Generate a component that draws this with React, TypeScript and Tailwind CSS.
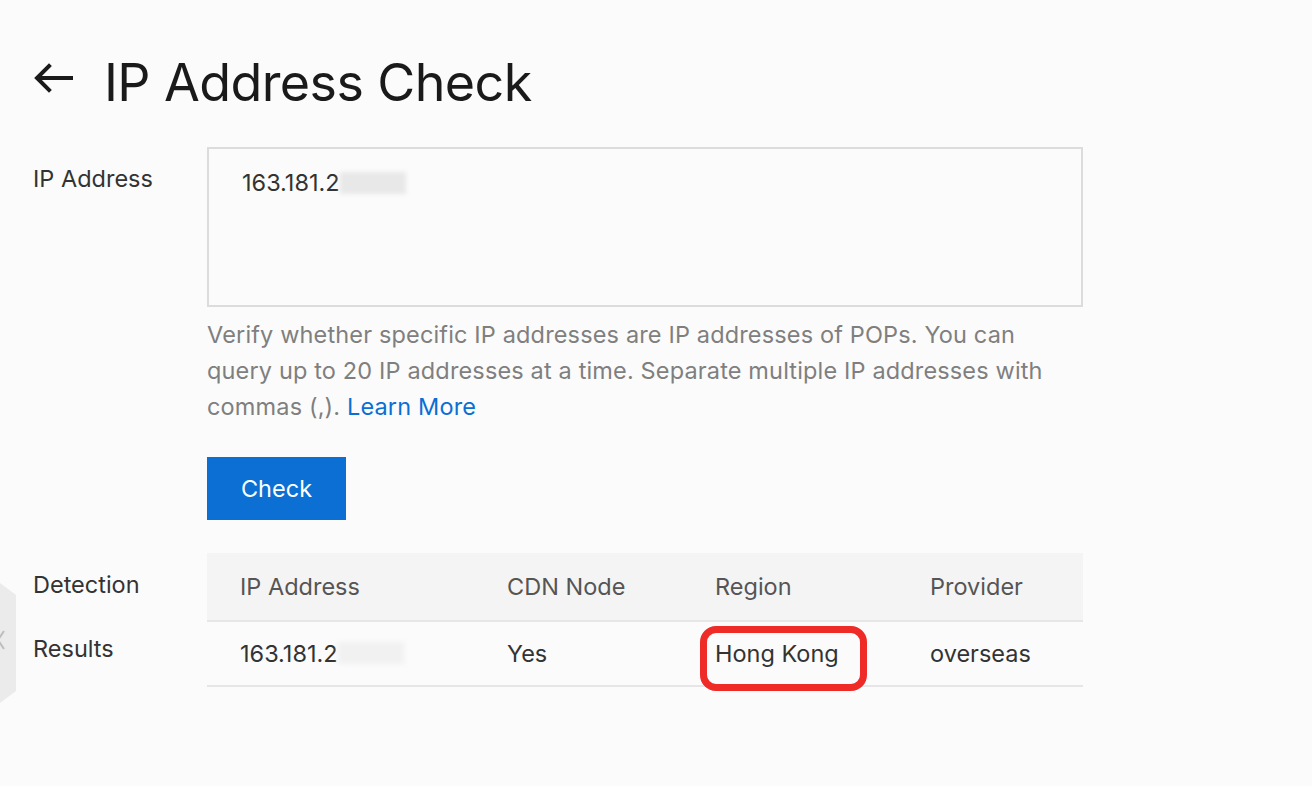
import { FC } from "react"

const columns = [
	{ label: "IP Address", width: "w-[267px]" },
	{ label: "CDN Node", width: "w-[208px]" },
	{ label: "Region", width: "w-[215px]" },
	{ label: "Provider", width: "flex-1" },
]

const BlurMask: FC<{ className: string }> = ({ className }) => (
	<span className={`inline-block align-middle blur-[2px] ${className}`} />
)

const SideHandle: FC = () => (
	<svg className="absolute left-0 top-[583px]" width="18" height="120" viewBox="0 0 18 120">
		<path d="M0 0 L16 12 L16 108 L0 120 Z" fill="#ebebeb" />
		<path d="M4 48 L-2 57 L4 66" stroke="#bdbdbd" strokeWidth="2" fill="none" />
	</svg>
)

const App: FC = () => {
	return (
		<div className="relative w-[1312px] h-[786px] overflow-hidden bg-[#fbfbfb] text-[#333]" style={{ fontFamily: "Inter, 'Liberation Sans', sans-serif" }}>
			<SideHandle />

			<header className="flex items-start pl-[33px] pt-[52px] h-[118px]">
				<svg className="mt-[11px]" width="41" height="30" viewBox="0 0 41 30" fill="none" stroke="#1a1a1a" strokeWidth="4" strokeLinecap="square">
					<path d="M38 15 H5" />
					<path d="M16 3 L4 15 L16 27" />
				</svg>
				<h1 className="ml-[30px] text-[52px] leading-[62px] text-[#1a1a1a] tracking-[-0.6px]">IP Address Check</h1>
			</header>

			<section className="flex mt-[29px]">
				<label className="w-[174px] ml-[33px] pt-[18px] text-[23.5px] leading-[28px]">IP Address</label>
				<div className="w-[876px]">
					<div className="h-[160px] border-2 border-[#dcdcdc] bg-[#fbfbfb] pl-[33px] pt-[20px] text-[23.5px] leading-[28px]">
						163.181.2
						<BlurMask className="w-[66px] h-[22px] -mt-[4px] bg-[#e8e8e8]" />
					</div>
					<p className="mt-[10px] max-w-[855px] text-[23.5px] leading-[36px] tracking-[0.15px] text-[#7f7f7f]">
						Verify whether specific IP addresses are IP addresses of POPs. You can query up to 20 IP addresses at a time. Separate multiple IP addresses with commas (,).{" "}
						<a className="text-[#0a6fd4]">Learn More</a>
					</p>
					<button className="mt-[32px] w-[139px] h-[63px] bg-[#0b6fd3] text-white text-[23.5px]">Check</button>
				</div>
			</section>

			<section className="flex mt-[33px]">
				<div className="w-[174px] ml-[33px] text-[23.5px] leading-[64px]">
					<div>Detection</div>
					<div>Results</div>
				</div>
				<div className="relative w-[876px]">
					<div className="flex h-[69px] items-center bg-[#f4f4f4] border-b-2 border-[#e6e6e6] text-[23.5px] text-[#555]">
						{columns.map(col => (
							<div key={col.label} className={`${col.width} pl-[33px]`}>
								{col.label}
							</div>
						))}
					</div>
					<div className="flex h-[65px] items-center border-b-2 border-[#e6e6e6] text-[23.5px]">
						<div className="w-[267px] pl-[33px]">
							163.181.2
							<BlurMask className="w-[66px] h-[22px] -mt-[4px] bg-[#f1f1f1]" />
						</div>
						<div className="w-[208px] pl-[33px]">Yes</div>
						<div className="w-[215px] pl-[33px]">Hong Kong</div>
						<div className="flex-1 pl-[33px]">overseas</div>
					</div>
					<div className="absolute left-[493px] top-[73px] w-[167px] h-[65px] rounded-[16px] border-[7px] border-[#ef2b27]" />
				</div>
			</section>
		</div>
	)
}

export default App
